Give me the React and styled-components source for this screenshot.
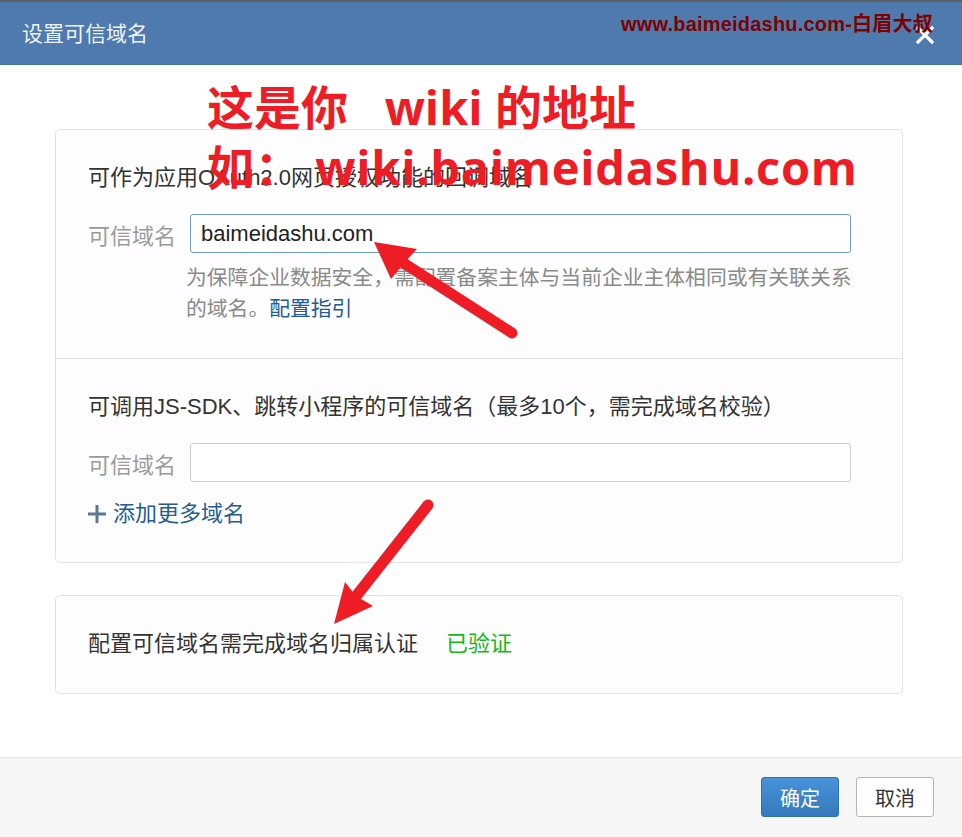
import React from "react"
import styled, { createGlobalStyle } from "styled-components"

const GlobalStyle = createGlobalStyle`
  html, body {
    margin: 0;
    padding: 0;
    background: #ffffff;
  }
  body {
    font-family: "Liberation Sans", "Noto Sans CJK SC", sans-serif;
  }
`

function App() {
  return (
    <Page>
      <GlobalStyle />
      <Header>
        <h2>设置可信域名</h2>
        <CloseButton aria-label="close">
          <svg width="18" height="18" viewBox="0 0 18 18">
            <path
              d="M2 2 L16 16 M16 2 L2 16"
              stroke="#ffffff"
              strokeWidth="3.2"
              strokeLinecap="square"
            />
          </svg>
        </CloseButton>
      </Header>

      <Body>
        <Card>
          <Section>
            <SectionTitle>可作为应用OAuth2.0网页授权功能的回调域名</SectionTitle>
            <FieldRow>
              <label htmlFor="oauth-domain">可信域名</label>
              <DomainInput
                id="oauth-domain"
                type="text"
                defaultValue="baimeidashu.com"
                $focused
              />
            </FieldRow>
            <HelpText>
              为保障企业数据安全，需配置备案主体与当前企业主体相同或有关联关系
              <br />
              的域名。<a href="#guide">配置指引</a>
            </HelpText>
          </Section>
          <Section>
            <SectionTitle>
              可调用JS-SDK、跳转小程序的可信域名（最多10个，需完成域名校验）
            </SectionTitle>
            <FieldRow>
              <label htmlFor="jssdk-domain">可信域名</label>
              <DomainInput id="jssdk-domain" type="text" />
            </FieldRow>
            <AddMore href="#add">
              <svg width="18" height="18" viewBox="0 0 18 18">
                <rect x="0" y="7.5" width="18" height="3" fill="#5b7896" />
                <rect x="7.5" y="0" width="3" height="18" fill="#5b7896" />
              </svg>
              添加更多域名
            </AddMore>
          </Section>
        </Card>

        <Card>
          <VerifyRow>
            配置可信域名需完成域名归属认证
            <Verified>已验证</Verified>
          </VerifyRow>
        </Card>
      </Body>

      <Footer>
        <Button $primary>确定</Button>
        <Button>取消</Button>
      </Footer>

      <Watermark>www.baimeidashu.com-白眉大叔</Watermark>

      <Note>
        <NoteLine>这是你   wiki 的地址</NoteLine>
        <NoteLine $spread>如： wiki.baimeidashu.com</NoteLine>
      </Note>

      <Arrows width="962" height="837" viewBox="0 0 962 837">
        <line x1="512" y1="333" x2="402" y2="262" />
        <polygon points="374,242 417,249 404,263 391,279" />
        <line x1="428" y1="505" x2="357" y2="595" />
        <polygon points="334,624 345,582 356,596 373,606" />
      </Arrows>
    </Page>
  )
}

const Page = styled.div`
  position: relative;
  width: 962px;
  height: 837px;
  display: flex;
  flex-direction: column;
  overflow: hidden;
  background: #ffffff;
`

const Header = styled.div`
  height: 62px;
  border-top: 2px solid #5c5f63;
  background: #4e7aad;
  display: flex;
  align-items: center;
  justify-content: space-between;
  padding: 0 28px 0 22px;
  box-sizing: content-box;
  border-bottom: 1px solid #4a74a4;

  h2 {
    margin: 2px 0 0;
    font-size: 21px;
    font-weight: 400;
    color: #eef2f7;
    line-height: 30px;
  }
`

const CloseButton = styled.button`
  border: 0;
  background: transparent;
  padding: 0;
  margin-top: 4px;
  display: flex;
  cursor: pointer;
`

const Body = styled.div`
  flex: 1;
  padding: 64px 59px 0 55px;
  display: flex;
  flex-direction: column;
  gap: 32px;
`

const Card = styled.div`
  border: 1px solid #e3e3e3;
  border-radius: 5px;
  background: #fdfdfd;
`

const Section = styled.div`
  padding: 33px 32px 34px 32px;

  & + & {
    border-top: 1px solid #e4e4e4;
    padding-top: 33px;
    padding-bottom: 33px;
  }
`

const SectionTitle = styled.div`
  font-size: 22px;
  line-height: 30px;
  color: #333333;
`

const FieldRow = styled.div`
  display: flex;
  align-items: center;
  margin-top: 21px;

  label {
    width: 102px;
    font-size: 22px;
    color: #9b9b9b;
  }
`

const DomainInput = styled.input`
  width: 661px;
  height: 39px;
  box-sizing: border-box;
  border: 1px solid ${(p) => (p.$focused ? "#6e9bcb" : "#cccccc")};
  border-radius: 3px;
  padding: 0 10px;
  font-family: "Liberation Sans", "Noto Sans CJK SC", sans-serif;
  font-size: 22px;
  color: #222222;
  background: #ffffff;
  outline: none;
`

const HelpText = styled.p`
  margin: 9px 0 0 98px;
  font-size: 20.8px;
  line-height: 31px;
  color: #8a8a8a;
  white-space: nowrap;

  a {
    color: #1f5c94;
    text-decoration: none;
  }
`

const AddMore = styled.a`
  margin-top: 17px;
  display: flex;
  align-items: center;
  gap: 7px;
  font-size: 22px;
  line-height: 30px;
  color: #235d92;
  text-decoration: none;
`

const VerifyRow = styled.div`
  padding: 33px 32px 34px;
  font-size: 22px;
  line-height: 30px;
  color: #333333;
`

const Verified = styled.span`
  margin-left: 28px;
  color: #16b816;
`

const Footer = styled.div`
  height: 60px;
  border-top: 1px solid #e3e3e3;
  background: #f7f7f7;
  display: flex;
  justify-content: flex-end;
  align-items: flex-start;
  gap: 17px;
  padding: 19px 28px 0 0;
`

const Button = styled.button`
  width: 78px;
  height: 40px;
  border-radius: 3px;
  font-family: "Liberation Sans", "Noto Sans CJK SC", sans-serif;
  font-size: 20px;
  cursor: pointer;
  border: 1px solid ${(p) => (p.$primary ? "#2f70b0" : "#b5b5b5")};
  color: ${(p) => (p.$primary ? "#ffffff" : "#333333")};
  background: ${(p) =>
    p.$primary ? "linear-gradient(#4893da, #3579bb)" : "#ffffff"};
`

const Watermark = styled.div`
  position: absolute;
  left: 621px;
  top: 8px;
  font-family: "Liberation Sans", "Noto Sans CJK SC", sans-serif;
  font-weight: 700;
  font-size: 20px;
  letter-spacing: 0.2px;
  color: #800000;
  white-space: nowrap;
`

const Note = styled.div`
  position: absolute;
  left: 207px;
  top: 77px;
  display: flex;
  flex-direction: column;
  font-family: "Open Sans", "Noto Sans CJK SC", sans-serif;
  font-weight: 700;
  font-size: 47px;
  line-height: 60px;
  color: #ee1c25;
  white-space: pre;
  pointer-events: none;
`

const NoteLine = styled.span`
  letter-spacing: ${(p) => (p.$spread ? "0.7px" : "0")};
`

const Arrows = styled.svg`
  position: absolute;
  left: 0;
  top: 0;
  pointer-events: none;

  line {
    stroke: #ee1c25;
    stroke-width: 11;
    stroke-linecap: round;
  }
  polygon {
    fill: #ee1c25;
  }
`

export default App
